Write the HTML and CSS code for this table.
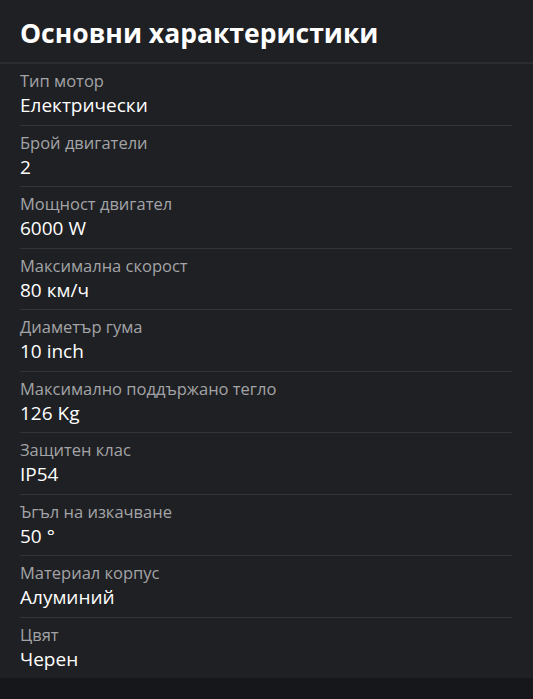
FILE: index.html
```
<!DOCTYPE html>
<html lang="bg">

<head>
    <meta charset="UTF-8">
    <meta name="viewport" content="width=device-width, initial-scale=1.0">
    <title>Основни характеристики</title>
    <link rel="stylesheet" href="styles.css">
</head>

<body>
    <div class="specs">
        <h2 class="specs-title">Основни характеристики</h2>

        <div class="spec-list">
            <div class="spec">
                <p class="spec-label">Тип мотор</p>
                <p class="spec-value">Електрически</p>
            </div>
            <div class="spec">
                <p class="spec-label">Брой двигатели</p>
                <p class="spec-value">2</p>
            </div>
            <div class="spec">
                <p class="spec-label">Мощност двигател</p>
                <p class="spec-value">6000 W</p>
            </div>
            <div class="spec">
                <p class="spec-label">Максимална скорост</p>
                <p class="spec-value">80 км/ч</p>
            </div>
            <div class="spec">
                <p class="spec-label">Диаметър гума</p>
                <p class="spec-value">10 inch</p>
            </div>
            <div class="spec">
                <p class="spec-label">Максимално поддържано тегло</p>
                <p class="spec-value">126 Kg</p>
            </div>
            <div class="spec">
                <p class="spec-label">Защитен клас</p>
                <p class="spec-value">IP54</p>
            </div>
            <div class="spec">
                <p class="spec-label">Ъгъл на изкачване</p>
                <p class="spec-value">50 °</p>
            </div>
            <div class="spec">
                <p class="spec-label">Материал корпус</p>
                <p class="spec-value">Алуминий</p>
            </div>
            <div class="spec">
                <p class="spec-label">Цвят</p>
                <p class="spec-value">Черен</p>
            </div>
        </div>
    </div>
</body>

</html>
```

FILE: styles.css
```
body {
    margin: 0;
    font-family: "Open Sans", "Noto Sans", sans-serif;
    background-color: #16171a;
    color: #fff;
}

.specs {
    background: #1f2023;
}

.specs-title {
    margin: 0;
    height: 64px;
    box-sizing: border-box;
    padding: 14px 20px 0;
    font-size: 26.5px;
    line-height: 38px;
    font-weight: 700;
    border-bottom: 2px solid #2b2c2f;
}

.spec-list {
    padding: 0 21px 0 20px;
}

.spec {
    padding: 5px 0 7.5px;
    border-bottom: 1px solid #333438;
}

.spec:last-child {
    border-bottom: none;
}

.spec-label,
.spec-value {
    margin: 0;
    line-height: 24px;
}

.spec-label {
    font-size: 16.5px;
    color: #a3a4a7;
}

.spec-value {
    font-size: 19px;
    font-weight: 500;
    color: #fff;
}
```
